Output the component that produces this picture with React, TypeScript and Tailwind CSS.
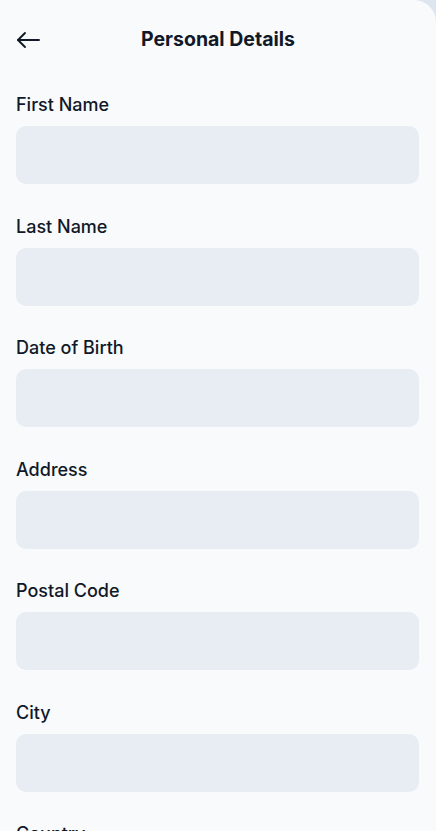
import React from "react";

const FIELDS = [
  "First Name",
  "Last Name",
  "Date of Birth",
  "Address",
  "Postal Code",
  "City",
  "Country",
];

function BackArrow() {
  return (
    <svg
      width="24"
      height="24"
      viewBox="0 0 24 24"
      fill="none"
      stroke="#111827"
      strokeWidth="1.9"
      strokeLinecap="round"
      strokeLinejoin="round"
    >
      <path d="M23 12H2" />
      <path d="M9 5l-7 7 7 7" />
    </svg>
  );
}

function Field({ label }: { label: string }) {
  return (
    <div className="flex flex-col gap-[9px]">
      <label className="text-[18px] font-medium leading-6 text-[#111827]">
        {label}
      </label>
      <input
        className="h-[58px] w-full rounded-[10px] bg-[#e8edf4] px-4 text-[16px] text-[#111827] outline-none"
        type="text"
      />
    </div>
  );
}

export default function App() {
  return (
    <div
      className="h-[831px] overflow-hidden bg-[#dde5ee]"
      style={{ fontFamily: "Inter, 'Noto Sans', sans-serif" }}
    >
      <div className="h-full rounded-tr-[22px] bg-[#f8fafc]">
        <header className="relative flex h-[80px] items-center justify-center">
          <button className="absolute left-[16px] top-[28px] flex items-center">
            <BackArrow />
          </button>
          <h1 className="text-[19.5px] font-bold text-[#111827]">
            Personal Details
          </h1>
        </header>
        <form className="flex flex-col gap-[30.5px] pl-4 pr-[17px] pt-[13px]">
          {FIELDS.map((f) => (
            <Field key={f} label={f} />
          ))}
        </form>
      </div>
    </div>
  );
}
